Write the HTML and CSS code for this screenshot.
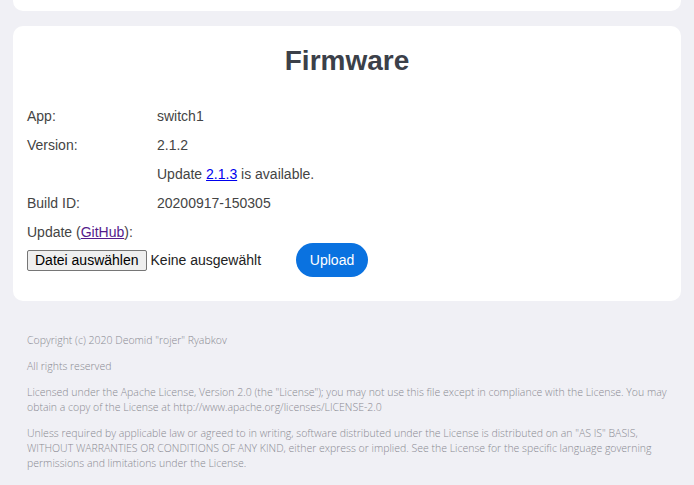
FILE: index.html
```html
<!DOCTYPE html>
<html lang="de">
<head>
  <meta charset="UTF-8">
  <meta name="viewport" content="width=device-width, initial-scale=1.0">
  <title>Firmware</title>
  <link rel="stylesheet" href="styles.css">
</head>
<body>
  <div class="card card-prev"></div>
  <div class="card">
    <h1>Firmware</h1>
    <div class="info">
      <div class="label">App:</div><div class="value">switch1</div>
      <div class="label">Version:</div><div class="value">2.1.2</div>
      <div class="label"></div><div class="value">Update <a href="#" class="link">2.1.3</a> is available.</div>
      <div class="label">Build ID:</div><div class="value">20200917-150305</div>
    </div>
    <div class="update-title">Update (<a href="#" class="visited">GitHub</a>):</div>
    <div class="upload-row">
      <label class="file-btn">Datei auswählen</label>
      <span class="file-name">Keine ausgewählt</span>
      <button class="upload-btn">Upload</button>
    </div>
  </div>
  <div class="footer">
    <p>Copyright (c) 2020 Deomid "rojer" Ryabkov</p>
    <p>All rights reserved</p>
    <p>Licensed under the Apache License, Version 2.0 (the "License"); you may not use this file except in compliance with the License. You may obtain a copy of the License at http://www.apache.org/licenses/LICENSE-2.0</p>
    <p>Unless required by applicable law or agreed to in writing, software distributed under the License is distributed on an "AS IS" BASIS, WITHOUT WARRANTIES OR CONDITIONS OF ANY KIND, either express or implied. See the License for the specific language governing permissions and limitations under the License.</p>
  </div>
</body>
</html>
```
FILE: styles.css
```css
body {
  font-family: Arial, 'Liberation Sans', sans-serif;
  background: #f0f0f5;
  margin: 0;
  padding: 0 13px;
  color: #444;
}
.card {
  background: #fff;
  border-radius: 10px;
  padding: 14px 14px 24px 14px;
  margin-bottom: 15px;
}
.card-prev {
  height: 11px;
  padding: 0;
  border-radius: 0 0 10px 10px;
}
h1 {
  text-align: center;
  font-size: 28px;
  color: #3b4049;
  margin: 1px 0 27px 0;
  line-height: 40px;
}
.info {
  display: grid;
  grid-template-columns: 130px 1fr;
  row-gap: 13px;
  font-size: 14px;
  line-height: 16px;
}
.link {
  color: #0000ee;
}
.visited {
  color: #551a8b;
}
.update-title {
  margin-top: 13px;
  font-size: 14px;
  line-height: 16px;
}
.upload-row {
  display: flex;
  align-items: center;
  margin-top: 3px;
  font-size: 14px;
}
.file-btn {
  background: #efefef;
  border: 1px solid #767676;
  border-radius: 2px;
  padding: 1px 7px;
  line-height: 17px;
  color: #000;
}
.file-name {
  margin-left: 4px;
  color: #222;
}
.upload-btn {
  margin-left: 35px;
  width: 72px;
  height: 34px;
  border: none;
  border-radius: 17px;
  background: #0a72e0;
  color: #fff;
  font-family: Arial, 'Liberation Sans', sans-serif;
  font-size: 14px;
}
.footer {
  padding: 17px 14px 0 14px;
  font-family: 'Open Sans', sans-serif;
  font-weight: 300;
  font-size: 10.5px;
  line-height: 15px;
  color: #8a8a92;
}
.footer p {
  margin: 0 0 11px 0;
}
```
